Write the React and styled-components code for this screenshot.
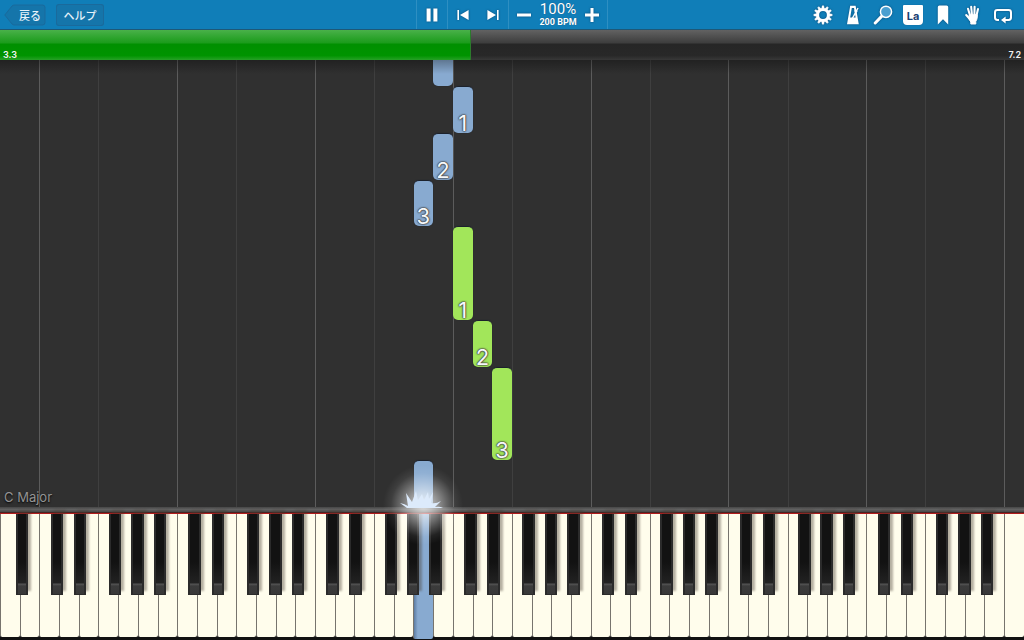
import React from "react";
import styled, { createGlobalStyle, css } from "styled-components";

const WHITE_KEYS = 52;
const SLOTS = 9.56; // note lengths visible in the roll

// offset of the black key centre from the right edge of its white key (%)
const BLACK_SHIFT = { A: 13, C: -12, D: 6, F: -16, G: -2 };
const NAMES = ["A", "B", "C", "D", "E", "F", "G"];

const keys = Array.from({ length: WHITE_KEYS }, (_, i) => ({
  id: i,
  name: NAMES[i % 7],
  pressed: i === 21,
  hasBlack: i < WHITE_KEYS - 1 && NAMES[i % 7] in BLACK_SHIFT,
}));

const notes = [
  { key: 22, start: 9, length: 1, hand: "left", finger: "" },
  { key: 23, start: 8, length: 1, hand: "left", finger: "1" },
  { key: 22, start: 7, length: 1, hand: "left", finger: "2" },
  { key: 21, start: 6, length: 1, hand: "left", finger: "3" },
  { key: 23, start: 4, length: 2, hand: "right", finger: "1" },
  { key: 24, start: 3, length: 1, hand: "right", finger: "2" },
  { key: 25, start: 1, length: 2, hand: "right", finger: "3" },
  { key: 21, start: 0, length: 1, hand: "left", finger: "" },
];

const GearIcon = () => (
  <svg width="20" height="20" viewBox="0 0 20 20" fill="none" stroke="#fff">
    {Array.from({ length: 12 }, (_, i) => (
      <path
        key={i}
        d="M8.6 4 L9.2 .8 H10.8 L11.4 4 Z"
        fill="#fff"
        strokeWidth=".4"
        transform={`rotate(${i * 30} 10 10)`}
      />
    ))}
    <circle cx="10" cy="10" r="5.4" strokeWidth="3" />
  </svg>
);

const MetronomeIcon = () => (
  <svg width="20" height="20" viewBox="0 0 20 20">
    <path
      fill="#fff"
      fillRule="evenodd"
      d="M7.2 .8 H12.6 L15.8 19.2 H4 Z M8.8 3 L7.2 12.6 H12.6 L11 3 Z"
    />
    <path d="M9.4 13.4 L15 3" stroke="#fff" strokeWidth="1.4" />
    <path d="M11.6 5.4 L14.2 6.8" stroke="#fff" strokeWidth="2" />
  </svg>
);

const SearchIcon = () => (
  <svg width="20" height="20" viewBox="0 0 20 20">
    <path d="M2.2 18 L8.6 11.4" stroke="#fff" strokeWidth="3" strokeLinecap="round" />
    <circle cx="13" cy="6.8" r="5.6" fill="#4a9fd0" stroke="#fff" strokeWidth="1.5" />
  </svg>
);

const BookmarkIcon = () => (
  <svg width="20" height="20" viewBox="0 0 20 20">
    <path fill="#fff" d="M4.8 2 Q4.8 .4 6.4 .4 H13.6 Q15.2 .4 15.2 2 V19.4 L10 14.2 L4.8 19.4 Z" />
  </svg>
);

const HandIcon = () => (
  <svg width="20" height="20" viewBox="0 0 20 20" fill="none" stroke="#fff" strokeLinecap="round">
    <path
      strokeWidth="2.1"
      d="M7.2 11 L5 3.8 M9 10 L8.2 1.8 M11.4 10 L11.6 1.8 M13.4 11 L15 4 M7 14.4 L3.2 10"
    />
    <path
      fill="#fff"
      strokeWidth="1"
      d="M6.6 10 L14.2 9.6 C14.6 13 13.8 15 12.8 16.6 V19 H7.8 V17 L5.6 13.4 Z"
    />
  </svg>
);

const LoopIcon = () => (
  <svg width="20" height="20" viewBox="0 0 20 20">
    <path
      fill="none"
      stroke="#fff"
      strokeWidth="2"
      d="M6 15 H4.4 Q2 15 2 12.6 V7.4 Q2 5 4.4 5 H15.6 Q18 5 18 7.4 V12.6 Q18 15 15.6 15 H11"
    />
    <path fill="#fff" d="M12.6 11.6 V18.4 L8 15 Z" />
  </svg>
);

const tools = [
  { label: "Settings", icon: <GearIcon /> },
  { label: "Metronome", icon: <MetronomeIcon /> },
  { label: "Zoom", icon: <SearchIcon /> },
  { label: "Note labels", icon: "La" },
  { label: "Bookmark", icon: <BookmarkIcon /> },
  { label: "Hands", icon: <HandIcon /> },
  { label: "Loop", icon: <LoopIcon /> },
];

const App = () => {
  return (
    <>
      <GlobalStyle />
      <Player>
        <Toolbar>
          <NavGroup>
            <BackButton>
              <svg width="42" height="22" viewBox="0 0 42 22">
                <path
                  d="M.8 11 L8 2 Q9 1 10.6 1 H38.5 Q41 1 41 3.5 V18.5 Q41 21 38.5 21 H10.6 Q9 21 8 20 Z"
                  fill="#1575aa"
                  stroke="#1a6a9c"
                />
              </svg>
              <span>戻る</span>
            </BackButton>
            <HelpButton>ヘルプ</HelpButton>
          </NavGroup>

          <Transport>
            <Section>
              <IconButton aria-label="Pause">
                <svg width="12" height="14" viewBox="0 0 12 14" fill="#fff">
                  <path d="M.6 .5 H4.6 V13.5 H.6 Z M7.4 .5 H11.4 V13.5 H7.4 Z" />
                </svg>
              </IconButton>
            </Section>
            <Section>
              <IconButton aria-label="Previous">
                <svg width="12" height="10" viewBox="0 0 12 10" fill="#fff">
                  <path d="M.4 0 H2 V10 H.4 Z M11.6 0 V10 L3 5 Z" />
                </svg>
              </IconButton>
              <IconButton aria-label="Next">
                <svg width="12" height="10" viewBox="0 0 12 10" fill="#fff">
                  <path d="M10 0 H11.6 V10 H10 Z M.4 0 V10 L9 5 Z" />
                </svg>
              </IconButton>
            </Section>
            <Section>
              <IconButton aria-label="Slower">
                <svg width="14" height="14" viewBox="0 0 14 14" stroke="#fff" strokeWidth="3">
                  <path d="M0 7 H14" />
                </svg>
              </IconButton>
              <Tempo>
                <Percent>100%</Percent>
                <Bpm>200 BPM</Bpm>
              </Tempo>
              <IconButton aria-label="Faster">
                <svg width="14" height="14" viewBox="0 0 14 14" stroke="#fff" strokeWidth="3">
                  <path d="M0 7 H14 M7 0 V14" />
                </svg>
              </IconButton>
            </Section>
          </Transport>

          <Tools>
            {tools.map((tool) => (
              <IconButton key={tool.label} aria-label={tool.label}>
                {tool.icon === "La" ? <LabelBadge>La</LabelBadge> : tool.icon}
              </IconButton>
            ))}
          </Tools>
        </Toolbar>

        <Timeline>
          <Elapsed style={{ width: "46%" }} />
          <Times>
            <span>3.3</span>
            <span>7.2</span>
          </Times>
        </Timeline>

        <Roll>
          <Lanes>
            {keys.map((k) => (
              <Lane key={k.id} $name={k.name} />
            ))}
          </Lanes>
          {notes.map((n) => (
            <Note
              key={n.start}
              $hand={n.hand}
              style={{
                left: `${(n.key / WHITE_KEYS) * 100}%`,
                bottom: `${(n.start / SLOTS) * 100}%`,
                height: `${(n.length / SLOTS) * 100}%`,
              }}
            >
              {n.finger}
            </Note>
          ))}
          <SongKey>C Major</SongKey>
        </Roll>

        <Rail />
        <Keyboard>
          {keys.map((k) => (
            <WhiteKey key={k.id} $pressed={k.pressed}>
              {k.hasBlack && <BlackKey $shift={BLACK_SHIFT[k.name]} />}
            </WhiteKey>
          ))}
          <Spark style={{ left: `${(21.5 / WHITE_KEYS) * 100}%` }}>
            <svg width="80" height="80" viewBox="0 0 80 80">
              <path
                fill="#dceafb"
                d="M17 43 Q21 43 24 43 L17 38 Q22 39 25 41 L23 28 Q27 34 29 37 L33 26 L35 35 L39 29 L41 35 L45 27 L46 34 L50 27 L48 38 Q53 39 58 36 Q54 40 52 42 Q57 41 60 43 Z"
              />
            </svg>
          </Spark>
        </Keyboard>
      </Player>
    </>
  );
};

export default App;

const GlobalStyle = createGlobalStyle`
  * {
    box-sizing: border-box;
  }
  body {
    margin: 0;
    background: #303030;
    font-family: Inter, "Noto Sans CJK JP", sans-serif;
  }
  button {
    padding: 0;
    border: 0;
    background: none;
    color: inherit;
    font: inherit;
    cursor: pointer;
  }
  svg {
    display: block;
  }
`;

const Player = styled.div`
  display: flex;
  flex-direction: column;
  height: 100vh;
  min-height: 360px;
  overflow: hidden;
`;

const Toolbar = styled.header`
  display: grid;
  grid-template-columns: 1fr auto 1fr;
  height: 30px;
  flex: none;
  background: #107eb8;
  border-bottom: 1px solid #1d5878;
  color: #fff;
`;

const NavGroup = styled.nav`
  display: flex;
  align-items: center;
  gap: 10px;
  padding: 1px 0 0 4px;
  font-family: "Noto Sans CJK JP", sans-serif;
  font-size: 11px;
  font-weight: 500;
  line-height: 22px;
  color: #e6f2fa;
`;

const BackButton = styled.button`
  display: grid;
  width: 42px;
  height: 22px;

  svg,
  span {
    grid-area: 1 / 1;
  }

  span {
    padding-left: 10px;
    z-index: 1;
  }
`;

const HelpButton = styled.button`
  width: 48px;
  height: 22px;
  border-radius: 3px;
  background: #1575aa;
  box-shadow: inset 0 0 0 1px #1a6a9c;
`;

const Transport = styled.div`
  display: flex;
  border-left: 1px solid #2e8fc2;
`;

const Section = styled.div`
  display: flex;
  align-items: center;
  border-right: 1px solid #2e8fc2;
`;

const IconButton = styled.button`
  display: flex;
  align-items: center;
  justify-content: center;
  width: 30px;
  height: 29px;

  svg {
    filter: drop-shadow(0 0 1px #0b4a78);
  }
`;

const Tempo = styled.div`
  display: flex;
  flex-direction: column;
  align-items: center;
  width: 38px;
  text-shadow: 0 0 1px #0b4a78;
`;

const Percent = styled.span`
  font-family: Roboto, sans-serif;
  font-size: 15px;
  line-height: 15px;
`;

const Bpm = styled.span`
  font-family: Roboto, sans-serif;
  font-size: 9px;
  font-weight: 700;
  line-height: 10px;
  white-space: nowrap;
`;

const Tools = styled.div`
  display: flex;
  justify-content: flex-end;
  padding-right: 6px;
`;

const LabelBadge = styled.span`
  width: 20px;
  height: 20px;
  border-radius: 1px 1px 4px 4px;
  background: #fff;
  box-shadow: 0 0 1px #0b4a78;
  color: #1b3f73;
  font-size: 11px;
  font-weight: 700;
  line-height: 22px;
  text-align: center;
`;

const Timeline = styled.div`
  display: grid;
  height: 30px;
  flex: none;
  background: linear-gradient(#626262, #3e3e3e 42%, #262626 48%, #282828 85%, #383838);

  > * {
    grid-area: 1 / 1;
  }
`;

const Elapsed = styled.div`
  border-right: 1px solid #2c7a2c;
  background: linear-gradient(#49b149, #1c9c1c 42%, #009000 48%, #009400 85%, #26a026);
`;

const Times = styled.div`
  display: flex;
  align-items: flex-end;
  justify-content: space-between;
  padding: 0 3px;
  color: #f4f4f4;
  font-size: 9px;
  font-weight: 600;
  line-height: 10px;
`;

const Roll = styled.main`
  position: relative;
  flex: 1;
  overflow: hidden;
  background: #303030;

  &::after {
    content: "";
    position: absolute;
    inset: 0 0 auto;
    height: 14px;
    background: linear-gradient(rgba(0, 0, 0, 0.3), transparent);
  }
`;

const Lanes = styled.div`
  display: flex;
  height: 100%;
`;

const Lane = styled.div`
  flex: 1;
  border-left: 1px solid transparent;
  ${({ $name }) => $name === "C" && css`border-color: #5c5c5c;`}
  ${({ $name }) => $name === "F" && css`border-color: #3f3f3f;`}
`;

const Note = styled.div`
  position: absolute;
  display: flex;
  align-items: flex-end;
  justify-content: center;
  width: calc(100% / 52);
  border-top: 1px solid #1c222c;
  border-radius: 5px;
  background: ${({ $hand }) => ($hand === "left" ? "#88aad0" : "#a2e65a")};
  box-shadow: 0 0 1px #1c222c;
  color: #f6f8fa;
  font-size: 22px;
  line-height: 20px;
  text-shadow: 0 0 1px #444, 0 0 1px #444, 0 0 2px #444, 0 0 2px #444;
`;

const SongKey = styled.div`
  position: absolute;
  left: 4px;
  bottom: 2px;
  color: #949494;
  font-size: 13px;
  line-height: 16px;
  text-shadow: 0 1px 2px #000;
`;

const Rail = styled.div`
  height: 6px;
  flex: none;
  border-bottom: 1px solid #4a2424;
  background: linear-gradient(#464646, #616161 50%, #484848);
`;

const Keyboard = styled.div`
  position: relative;
  display: flex;
  height: 127px;
  flex: none;
  border-top: 1px solid #b01c1c;
  background: #111;
`;

const WhiteKey = styled.div`
  position: relative;
  flex: 1;
  margin-bottom: ${({ $pressed }) => ($pressed ? 1 : 3)}px;
  border-left: 1px solid #77746d;
  border-radius: 0 0 2px 2px;
  background: ${({ $pressed }) =>
    $pressed ? "linear-gradient(90deg, #5d7da4, #88aad0 20%)" : "#fffdec"};
`;

const BlackKey = styled.div`
  position: absolute;
  top: 0;
  left: ${({ $shift }) => 67 + $shift}%;
  z-index: 1;
  width: 67%;
  height: 81px;
  border: solid #2b2b2b;
  border-width: 0 2px 1px;
  background: linear-gradient(
    #121212 60%,
    #222 69px,
    #555 70px,
    #3b3b3b 72px,
    #383838
  );
  box-shadow: 3px -4px 2px rgba(70, 60, 50, 0.4);
`;

const Spark = styled.div`
  position: absolute;
  top: -49px;
  z-index: 2;
  width: 80px;
  height: 80px;
  margin-left: -40px;
  background: radial-gradient(
    circle closest-side,
    rgba(255, 255, 255, 0.8) 0,
    rgba(255, 255, 255, 0.55) 30%,
    rgba(255, 255, 255, 0.25) 60%,
    rgba(255, 255, 255, 0.07) 80%,
    transparent
  );
`;
